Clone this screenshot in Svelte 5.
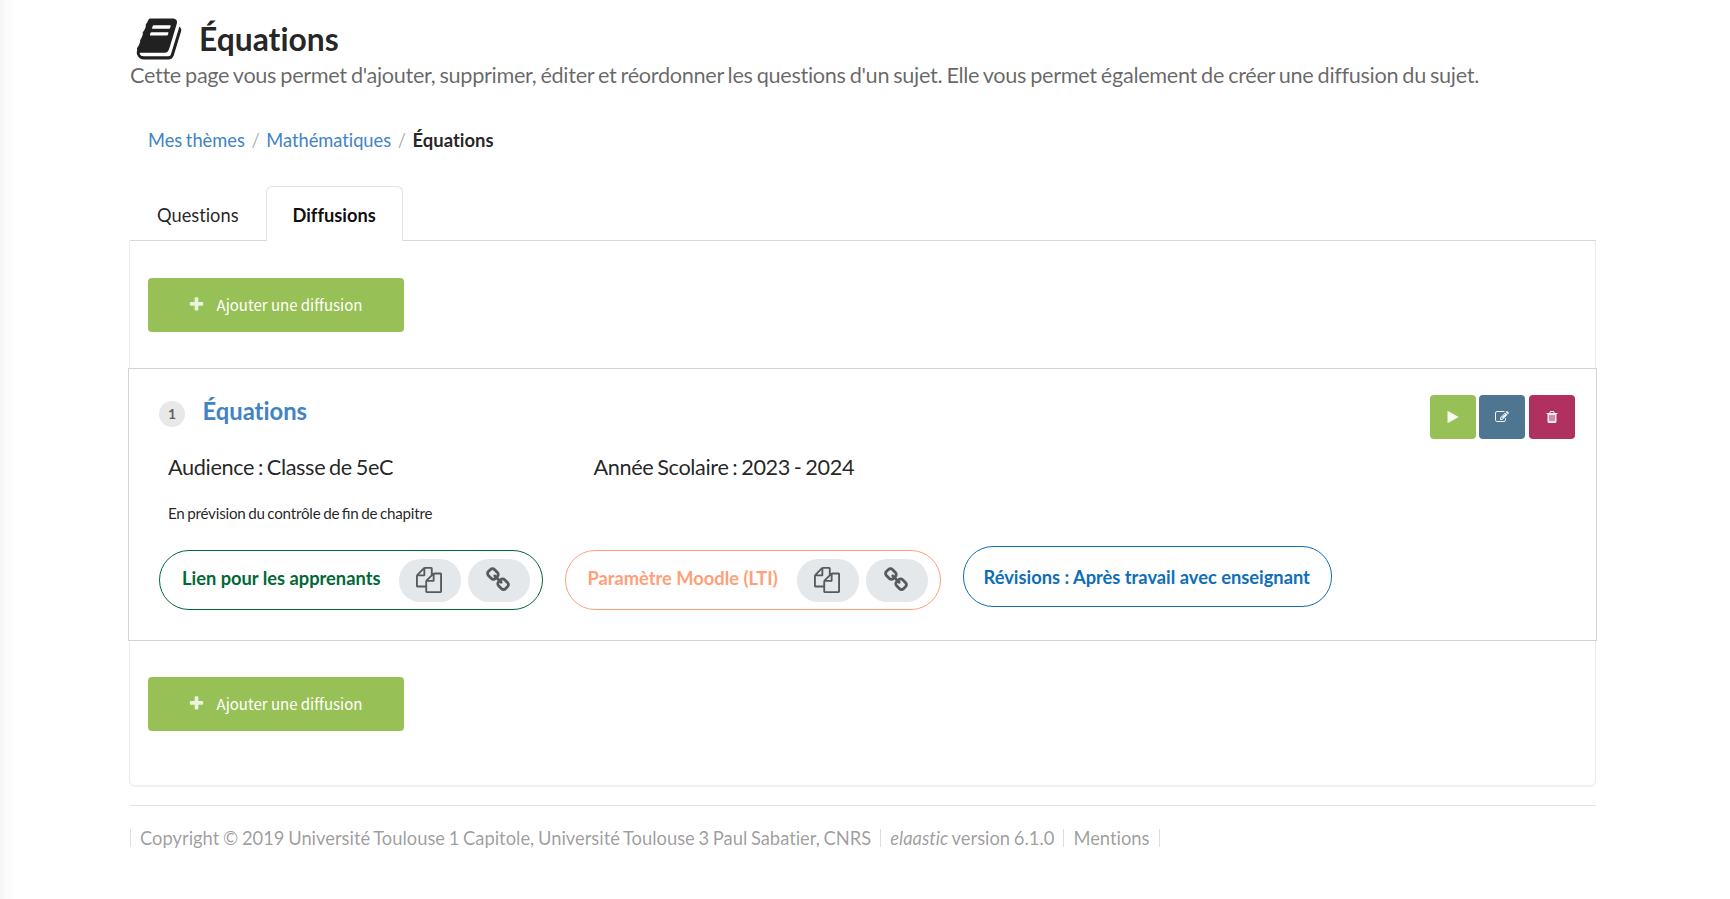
<script>
  const paths = {
    book: 'M1703 478q40 57 18 129l-275 906q-19 64-76.5 107.5t-122.5 43.5h-923q-77 0-148.5-53.5t-99.5-131.5q-24-67-2-127 0-4 3-27t4-37q1-8-3-21.5t-3-19.5q2-11 8-21t16.5-23.5 16.5-23.5q23-38 45-91.5t30-91.5q3-10 .5-30t-.5-28q3-11 17-28t17-23q21-36 42-92t25-90q1-9-2.5-32t.5-28q4-13 22-30.5t22-22.5q19-26 42.5-84.5t27.5-96.5q1-8-3-25.5t-2-26.5q2-8 9-18t18-23 17-21q8-12 16.5-30.5t15-35 16-36 19.5-32 26.5-23.5 36-11.5 47.5 5.5l-1 3q38-9 51-9h761q74 0 114 56t18 130l-274 906q-36 119-71.5 153.5t-128.5 34.5h-869q-27 0-38 15-11 16-1 43 24 70 144 70h923q29 0 56-15.5t35-41.5l300-987q7-22 5-57 38 15 59 43zm-1064 2q-4 13 2 22.5t20 9.5h608q13 0 25.5-9.5t16.5-22.5l21-64q4-13-2-22.5t-20-9.5h-608q-13 0-25.5 9.5t-16.5 22.5zm-83 256q-4 13 2 22.5t20 9.5h608q13 0 25.5-9.5t16.5-22.5l21-64q4-13-2-22.5t-20-9.5h-608q-13 0-25.5 9.5t-16.5 22.5z',
    plus: 'M1600 736v192q0 40-28 68t-68 28h-416v416q0 40-28 68t-68 28h-192q-40 0-68-28t-28-68v-416h-416q-40 0-68-28t-28-68v-192q0-40 28-68t68-28h416v-416q0-40 28-68t68-28h192q40 0 68 28t28 68v416h416q40 0 68 28t28 68z',
    play: 'M1576 927l-1328 738q-23 13-39.5 3t-16.5-36v-1472q0-26 16.5-36t39.5 3l1328 738q23 13 23 31t-23 31z',
    edit: 'M888 1184l116-116-152-152-116 116v56h96v96h56zm440-720q-16-16-33 1l-350 350q-17 17-1 33t33-1l350-350q17-17 1-33zm80 594v190q0 119-84.5 203.5t-203.5 84.5h-832q-119 0-203.5-84.5t-84.5-203.5v-832q0-119 84.5-203.5t203.5-84.5h832q63 0 117 25 15 7 18 23 3 17-9 29l-49 49q-14 14-32 8-23-6-45-6h-832q-66 0-113 47t-47 113v832q0 66 47 113t113 47h832q66 0 113-47t47-113v-126q0-13 9-22l64-64q15-15 35-7t20 29zm-96-738l288 288-672 672h-288v-288zm444 132l-92 92-288-288 92-92q28-28 68-28t68 28l152 152q28 28 28 68t-28 68z',
    trash: 'M704 1376v-704q0-14-9-23t-23-9h-64q-14 0-23 9t-9 23v704q0 14 9 23t23 9h64q14 0 23-9t9-23zm256 0v-704q0-14-9-23t-23-9h-64q-14 0-23 9t-9 23v704q0 14 9 23t23 9h64q14 0 23-9t9-23zm256 0v-704q0-14-9-23t-23-9h-64q-14 0-23 9t-9 23v704q0 14 9 23t23 9h64q14 0 23-9t9-23zm-544-992h448l-48-117q-7-9-17-11h-317q-10 2-17 11zm928 32v64q0 14-9 23t-23 9h-96v948q0 83-47 143.5t-113 60.5h-832q-66 0-113-58.5t-47-141.5v-952h-96q-14 0-23-9t-9-23v-64q0-14 9-23t23-9h309l70-167q15-37 54-63t79-26h320q40 0 79 26t54 63l70 167h309q14 0 23 9t9 23z',
    copy: 'M1696 384q40 0 68 28t28 68v1216q0 40-28 68t-68 28h-960q-40 0-68-28t-28-68v-288h-544q-40 0-68-28t-28-68v-672q0-40 20-88t48-76l408-408q28-28 76-48t88-20h416q40 0 68 28t28 68v328q68-40 128-40h416zm-544 213l-299 299h299v-299zm-640-384l-299 299h299v-299zm196 647l316-316v-416h-384v416q0 40-28 68t-68 28h-416v640h512v-256q0-40 20-88t48-76zm956 804v-1152h-384v416q0 40-28 68t-68 28h-416v640h896z',
    link: 'M1520 1216q0-40-28-68l-208-208q-28-28-68-28-42 0-72 32 3 3 19 18.5t21.5 21.5 15 19 13 25.5 3.5 27.5q0 40-28 68t-68 28q-15 0-27.5-3.5t-25.5-13-19-15-21.5-21.5-18.5-19q-33 31-33 73 0 40 28 68l206 207q27 27 68 27 40 0 68-26l147-146q28-28 28-67zm-703-705q0-40-28-68l-206-207q-28-28-68-28-39 0-68 27l-147 146q-28 28-28 67 0 40 28 68l208 208q27 27 68 27 42 0 72-31-3-3-19-18.5t-21.5-21.5-15-19-13-25.5-3.5-27.5q0-40 28-68t68-28q15 0 27.5 3.5t25.5 13 19 15 21.5 21.5 18.5 19q33-31 33-73zm895 705q0 120-85 203l-147 146q-83 83-203 83-121 0-204-85l-206-207q-83-83-83-203 0-123 88-209l-88-88q-86 88-208 88-120 0-204-84l-208-208q-84-84-84-204t85-203l147-146q83-83 203-83 121 0 204 85l206 207q83 83 83 203 0 123-88 209l88 88q86-88 208-88 120 0 204 84l208 208q84 84 84 204z'
  };
</script>

{#snippet icon(name, size)}
  <svg width={size} height={size} viewBox="0 0 1792 1792" aria-hidden="true"><path d={paths[name]} fill="currentColor" /></svg>
{/snippet}

{#snippet addButton()}
  <button class="add">{@render icon('plus', 17)}<span>Ajouter une diffusion</span></button>
{/snippet}

<div class="page">
  <main>
    <header>
      <span class="book">{@render icon('book', 48)}</span>
      <h1>Équations</h1>
    </header>
    <p class="subtitle">Cette page vous permet d'ajouter, supprimer, éditer et réordonner les questions d'un sujet. Elle vous permet également de créer une diffusion du sujet.</p>

    <nav class="breadcrumb">
      <a href="#themes">Mes thèmes</a><i>/</i><a href="#maths">Mathématiques</a><i>/</i><b>Équations</b>
    </nav>

    <div class="tabs">
      <span class="tab">Questions</span>
      <span class="tab active">Diffusions</span>
    </div>

    <section class="panel">
      {@render addButton()}
      <article>
        <div class="top">
          <span class="num">1</span>
          <h2>Équations</h2>
          <div class="actions">
            <button class="start">{@render icon('play', 14)}</button>
            <button class="edit">{@render icon('edit', 14)}</button>
            <button class="delete">{@render icon('trash', 14)}</button>
          </div>
        </div>
        <div class="meta">
          <span>Audience : Classe de 5eC</span>
          <span>Année Scolaire : 2023 - 2024</span>
        </div>
        <p class="note">En prévision du contrôle de fin de chapitre</p>
        <div class="pills">
          <div class="pill green">
            <span class="label">Lien pour les apprenants</span>
            <button>{@render icon('copy', 26)}</button>
            <button>{@render icon('link', 26)}</button>
          </div>
          <div class="pill orange">
            <span class="label">Paramètre Moodle (LTI)</span>
            <button>{@render icon('copy', 26)}</button>
            <button>{@render icon('link', 26)}</button>
          </div>
          <div class="pill blue">Révisions : Après travail avec enseignant</div>
        </div>
      </article>
      {@render addButton()}
    </section>

    <footer>
      <span>Copyright © 2019 Université Toulouse 1 Capitole, Université Toulouse 3 Paul Sabatier, CNRS</span>
      <span><em>elaastic</em> version 6.1.0</span>
      <span>Mentions</span>
    </footer>
  </main>
</div>

<style>
  :global(body) { background: #fff; overflow: hidden; }
  .page {
    box-sizing: border-box; height: 899px; padding: 19px 134px 0 129px;
    font-family: Lato, sans-serif; font-size: 18.25px; color: rgba(0, 0, 0, .87);
    font-variant-ligatures: none; word-spacing: -.055em;
    background: linear-gradient(90deg, #f6f6f6 0, #fbfbfb 7px, #fff 16px);
  }
  h1, h2, p { margin: 0; }
  svg { display: block; }
  button { border: 0; padding: 0; margin: 0; font: inherit; color: inherit; display: flex; align-items: center; justify-content: center; }
  header { display: flex; height: 41px; }
  .book { width: 70px; padding-left: 5.5px; box-sizing: border-box; margin-top: -4px; }
  h1 { font-size: 31.8px; line-height: 41px; }
  .subtitle { font-size: 21.7px; line-height: 30px; color: rgba(0, 0, 0, .6); padding-left: 1px; white-space: nowrap; letter-spacing: -.33px; word-spacing: -1.1px; }
  .breadcrumb { display: flex; margin: 37px 0 33px; padding-left: 19px; line-height: 27px; height: 26px; }
  .breadcrumb b { font-size: 18.45px; }
  a { color: #4183c4; text-decoration: none; }
  i { font-style: normal; color: rgba(0, 0, 0, .35); width: 21.5px; text-align: center; }
  .tabs { display: flex; height: 55px; border-bottom: 1px solid #d8d8d9; box-sizing: border-box; line-height: 59px; margin-left: 1px; }
  .tab { width: 135.5px; box-sizing: border-box; padding-left: 27px; }
  .active { width: 137.5px; height: 55px; line-height: 57px; padding-left: 26px; font-weight: 700; color: rgba(0, 0, 0, .95); background: #fff; border: 1px solid #e2e2e3; border-bottom: 0; border-radius: 6px 6px 0 0; }
  .panel { box-sizing: border-box; height: 546px; border: 1px solid #ebebec; border-top: 0; border-bottom: 2px solid #f1f1f2; border-radius: 0 0 6px 6px; padding-top: 37px; }
  .add { width: 256px; height: 53.5px; margin-left: 18px; padding-right: 2px; box-sizing: border-box; border-radius: 4px; background: #97c156; color: rgba(255, 255, 255, .8); }
  .add span { font-family: "Noto Sans CJK SC", sans-serif; font-size: 15px; line-height: 22px; margin-left: 12px; color: #fff; word-spacing: 0; }
  article { box-sizing: border-box; height: 273px; margin: 36.5px -2px 36px; border: 1px solid #d4d4d5; background: #fff; padding: 26px 21px 0 30px; }
  .top { display: flex; height: 44px; }
  .num { width: 26px; height: 26px; margin-top: 6px; border-radius: 50%; background: #e8e8e8; color: rgba(0, 0, 0, .6); font: 700 14px/26px Lato, sans-serif; text-align: center; }
  h2 { font-size: 23.8px; line-height: 33px; margin-left: 17.5px; color: #4183c4; }
  .actions { display: flex; gap: 3px; margin-left: auto; color: rgba(255, 255, 255, .9); }
  .actions button { width: 46px; height: 44px; border-radius: 4px; }
  .actions .start { background: #97c156; }
  .actions .edit { background: #4f7690; }
  .actions .delete { background: #b03060; margin-left: 1px; }
  .meta { display: flex; font-size: 21.7px; line-height: 30px; margin: 13px 0 0 9px; letter-spacing: -.36px; word-spacing: -1.4px; }
  .meta > span { width: 425.5px; }
  .note { font-size: 15.2px; line-height: 24px; margin: 19px 0 0 9px; letter-spacing: -.23px; font-variant-ligatures: normal; font-feature-settings: "liga" 1; }
  .pills { display: flex; align-items: flex-start; margin-top: 25px; font-weight: 700; font-size: 18.3px; word-spacing: 0; }
  .pill { box-sizing: border-box; display: flex; align-items: center; height: 60px; border: 1px solid; border-radius: 30px; padding-left: 22px; white-space: nowrap; }
  .pill button { width: 62px; height: 43px; box-sizing: border-box; padding-right: 2px; border-radius: 21px; background: #e5e8eb; color: #58595b; margin-right: 7px; }
  .pill button:last-child { margin-right: 12px; }
  .green { width: 383.5px; color: #016936; margin-right: 22px; }
  .orange { width: 376px; color: #ffa07a; margin-right: 22px; }
  .label { flex: 1; margin-top: -4px; }
  .blue { width: 369px; height: 61px; color: #0e6eb8; margin-top: -4px; padding-left: 20px; }
  footer { display: flex; margin: 18px 0 0 1px; border-top: 1px solid #e2e2e3; padding-top: 23px; line-height: 18px; color: rgba(0, 0, 0, .4); font-size: 18.35px; }
  footer > span { border-left: 1px solid #dededf; padding: 0 9px; }
  footer > span:last-child { border-right: 1px solid #dededf; }
</style>
